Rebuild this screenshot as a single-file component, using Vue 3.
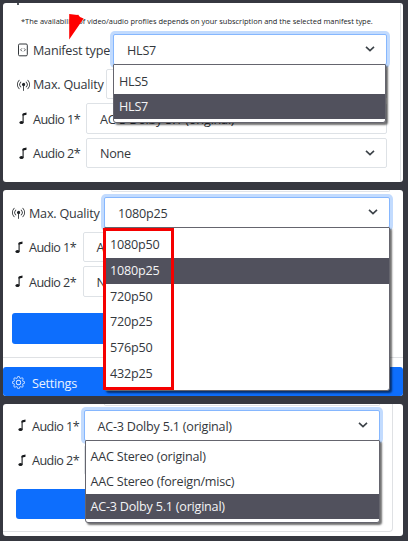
<script setup>
const panels = [
  {
    id: 'manifest',
    note: '*The availability of video/audio profiles depends on your subscription and the selected manifest type.',
    rows: [
      { icon: 'file', label: 'Manifest type', value: 'HLS7', focus: true, options: ['HLS5', 'HLS7'], selected: 'HLS7' },
      { icon: 'signal', label: 'Max. Quality', value: '' },
      { icon: 'music', label: 'Audio 1*', value: 'AC-3 Dolby 5.1 (original)' },
      { icon: 'music', label: 'Audio 2*', value: 'None' },
    ],
  },
  {
    id: 'quality',
    rows: [
      {
        icon: 'signal',
        label: 'Max. Quality',
        value: '1080p25',
        focus: true,
        options: ['1080p50', '1080p25', '720p50', '720p25', '576p50', '432p25'],
        selected: '1080p25',
        marked: true,
      },
      { icon: 'music', label: 'Audio 1*', value: 'AC-3 Dolby 5.1 (original)' },
      { icon: 'music', label: 'Audio 2*', value: 'None' },
    ],
    button: true,
    settings: true,
  },
  {
    id: 'audio',
    rows: [
      {
        icon: 'music',
        label: 'Audio 1*',
        value: 'AC-3 Dolby 5.1 (original)',
        focus: true,
        options: ['AAC Stereo (original)', 'AAC Stereo (foreign/misc)', 'AC-3 Dolby 5.1 (original)'],
        selected: 'AC-3 Dolby 5.1 (original)',
      },
      { icon: 'music', label: 'Audio 2*', value: '' },
    ],
    button: true,
  },
]
</script>

<template>
  <main class="page">
    <section v-for="p in panels" :key="p.id" class="panel" :class="p.id">
      <div class="card">
        <span v-if="!p.note" class="edge"></span>
        <span v-else class="stub"></span>
        <p v-if="p.note" class="note">{{ p.note }}</p>
        <div class="rows">
          <div v-for="r in p.rows" :key="r.label" class="row">
            <div class="label" :class="r.icon">
              <svg v-if="r.icon === 'file'" class="ic" viewBox="0 0 12 14">
                <rect x="1.5" y="1" width="8.8" height="11.8" rx="1.2" fill="none" stroke="#33373b" stroke-width="1" />
                <path d="M5 5.3 3.6 6.8 5 8.3M7 5.3 8.4 6.8 7 8.3" fill="none" stroke="#33373b" stroke-width=".8" />
              </svg>
              <svg v-else-if="r.icon === 'signal'" class="ic" viewBox="0 0 16 16">
                <path
                  fill="#212529"
                  d="M3.05 3.05a7 7 0 0 0 0 9.9.5.5 0 0 1-.707.707 8 8 0 0 1 0-11.314.5.5 0 0 1 .707.707m2.122 2.122a4 4 0 0 0 0 5.656.5.5 0 1 1-.708.708 5 5 0 0 1 0-7.072.5.5 0 0 1 .708.708m5.656-.708a.5.5 0 0 1 .708 0 5 5 0 0 1 0 7.072.5.5 0 1 1-.708-.708 4 4 0 0 0 0-5.656.5.5 0 0 1 0-.708m2.122-2.12a.5.5 0 0 1 .707 0 8 8 0 0 1 0 11.313.5.5 0 0 1-.707-.707 7 7 0 0 0 0-9.9.5.5 0 0 1 0-.707zM6 8a2 2 0 1 1 2.5 1.937V15.5a.5.5 0 0 1-1 0V9.937A2 2 0 0 1 6 8"
                />
              </svg>
              <svg v-else class="ic" viewBox="0 0 12 14">
                <ellipse cx="4.5" cy="11.5" rx="2.1" ry="1.5" fill="#17191c" />
                <path d="M6.1 11.5V3" fill="none" stroke="#17191c" stroke-width="1.1" />
                <path d="M5.55 3.2Q5.6 2.4 6.4 2.2L9.5 1.5V3.7L5.55 4.7z" fill="#17191c" />
              </svg>
              <span>{{ r.label }}</span>
            </div>
            <div class="select" :class="{ focus: r.focus }">
              <span>{{ r.value }}</span>
              <svg class="chev" viewBox="0 0 10 6">
                <path d="M1 .9 5 4.7 9 .9" fill="none" stroke="#3c4248" stroke-width="1.6" />
              </svg>
              <ul v-if="r.options" class="menu">
                <li v-for="o in r.options" :key="o" :class="{ on: o === r.selected }">{{ o }}</li>
                <li v-if="r.marked" class="mark"></li>
              </ul>
            </div>
          </div>
        </div>
        <div v-if="p.button" class="button"></div>
      </div>
      <div v-if="p.settings" class="settings">
        <svg class="gear" viewBox="0 0 16 16" fill="#d8e7ff">
          <path d="M8 4.754a3.246 3.246 0 1 0 0 6.492 3.246 3.246 0 0 0 0-6.492M5.754 8a2.246 2.246 0 1 1 4.492 0 2.246 2.246 0 0 1-4.492 0" />
          <path
            d="M9.796 1.343c-.527-1.79-3.065-1.79-3.592 0l-.094.319a.873.873 0 0 1-1.255.52l-.292-.16c-1.64-.892-3.433.902-2.54 2.541l.159.292a.873.873 0 0 1-.52 1.255l-.319.094c-1.79.527-1.79 3.065 0 3.592l.319.094a.873.873 0 0 1 .52 1.255l-.16.292c-.892 1.64.901 3.434 2.541 2.54l.292-.159a.873.873 0 0 1 1.255.52l.094.319c.527 1.79 3.065 1.79 3.592 0l.094-.319a.873.873 0 0 1 1.255-.52l.292.16c1.64.893 3.434-.902 2.54-2.541l-.159-.292a.873.873 0 0 1 .52-1.255l.319-.094c1.79-.527 1.79-3.065 0-3.592l-.319-.094a.873.873 0 0 1-.52-1.255l.16-.292c.893-1.64-.902-3.433-2.541-2.54l-.292.159a.873.873 0 0 1-1.255-.52zm-2.633.283c.246-.835 1.428-.835 1.674 0l.094.319a1.873 1.873 0 0 0 2.693 1.115l.291-.16c.764-.415 1.6.42 1.184 1.185l-.159.292a1.873 1.873 0 0 0 1.116 2.692l.318.094c.835.246.835 1.428 0 1.674l-.319.094a1.873 1.873 0 0 0-1.115 2.693l.16.291c.415.764-.42 1.6-1.185 1.184l-.291-.159a1.873 1.873 0 0 0-2.693 1.116l-.094.318c-.246.835-1.428.835-1.674 0l-.094-.319a1.873 1.873 0 0 0-2.692-1.115l-.292.16c-.764.415-1.6-.42-1.184-1.185l.159-.291A1.873 1.873 0 0 0 1.945 8.93l-.319-.094c-.835-.246-.835-1.428 0-1.674l.319-.094A1.873 1.873 0 0 0 3.06 4.377l-.16-.292c-.415-.764.42-1.6 1.185-1.184l.292.159a1.873 1.873 0 0 0 2.692-1.115z"
          />
        </svg>
        <span>Settings</span>
      </div>
      <svg v-if="p.note" class="arrow" viewBox="0 0 16 28">
        <path d="M1.2 1 9.5 2 10 1.4 12 4 15.6 5.5 1.2 26.5z" fill="#f00" />
      </svg>
    </section>
  </main>
</template>

<style>
body {
  margin: 0;
  background: #363840;
}
</style>

<style scoped>
* {
  box-sizing: border-box;
}
.page {
  width: 408px;
  height: 541px;
  padding: 3px 5px 5px 3px;
  display: flex;
  flex-direction: column;
  gap: 8px;
  background: #363840;
  color: #33373c;
  font: 12.6px/18px 'Open Sans', sans-serif;
  letter-spacing: -0.22px;
  overflow: hidden;
}
.panel {
  position: relative;
  background: #fff;
  border-radius: 3px;
  overflow: hidden;
}
.manifest { height: 179px; }
.quality { height: 206px; }
.audio { height: 132px; }
.card { position: relative; }
.manifest .card {
  width: 398px;
  height: 179px;
  border-right: 1px solid #e2e4e7;
}
.quality .card {
  height: 168px;
  padding-top: 7px;
  border-bottom: 1px solid #dfe1e4;
}
.audio .card {
  width: 390px;
  height: 128px;
  padding-top: 6px;
  border-right: 1px solid #dfe1e4;
  border-bottom: 1px solid #dfe1e4;
  border-radius: 0 0 4px 0;
}
.edge {
  position: absolute;
  top: 0;
  left: 108px;
  width: 279px;
  height: 2px;
  border: 1px solid #e0e3e8;
  border-top: 0;
  border-radius: 0 0 2px 2px;
}
.audio .edge {
  left: 101px;
  width: 276px;
}
.stub {
  position: absolute;
  top: 0;
  left: 14px;
  width: 2px;
  height: 2px;
  background: #51565c;
}
.note {
  margin: 0;
  padding: 13px 0 0 18px;
  height: 31px;
  font-size: 7.46px;
  line-height: 11px;
  letter-spacing: 0;
  white-space: nowrap;
  color: #202326;
}
.rows {
  display: flex;
  flex-direction: column;
  gap: 4px;
}
.row {
  display: flex;
  height: 30.5px;
}
.label {
  display: flex;
  align-items: center;
  white-space: nowrap;
  flex: none;
}
.label.music { letter-spacing: -0.55px; }
.ic {
  flex: none;
  width: 12px;
  height: 14px;
}
.file .ic { margin-top: 1px; }
.signal .ic {
  width: 13px;
  height: 13px;
  margin-top: 1px;
}
.label span { padding-top: 3px; }
.select {
  position: relative;
  flex: 1;
  display: flex;
  align-items: center;
  justify-content: space-between;
  padding: 0 11px 0 13px;
  border: 1px solid #dee2e6;
  border-radius: 2px;
  background: #fff;
  white-space: nowrap;
}
.select > span { padding-top: 3px; }
.select.focus > span { padding-top: 4px; }
.select.focus {
  border-color: #86b7fe;
  box-shadow: 0 0 0 3px #c2dbfe;
  z-index: 2;
}
.chev {
  width: 10px;
  height: 6px;
}
.manifest .row { margin-right: 13px; }
.manifest .label {
  padding-left: 14px;
  width: 83px;
}
.manifest .label.file { width: 110px; }
.manifest .label.signal {
  width: 103px;
  padding-left: 13.5px;
}
.manifest .label span { margin-left: 4px; }
.manifest .label.signal span { margin-left: 3.5px; }
.quality .row { margin-right: 13px; }
.quality .label {
  padding-left: 10px;
  width: 79.5px;
}
.quality .label.signal {
  width: 101px;
  padding-left: 9px;
}
.quality .label span { margin-left: 4px; }
.audio .row { margin-right: 12.5px; }
.audio .label {
  padding-left: 13px;
  width: 80.5px;
}
.audio .label span { margin-left: 4px; }
.menu {
  position: absolute;
  z-index: 3;
  top: 29px;
  left: -1px;
  right: -1px;
  margin: 0;
  padding: 4px 0 3px;
  list-style: none;
  background: #fff;
  border: 1px solid #65656e;
  border-radius: 1px 1px 3px 3px;
  box-shadow: 2px 2px 2px #00000090;
}
.menu li {
  height: 25px;
  line-height: 25px;
  padding-left: 5px;
}
.menu .on {
  background: #51515d;
  color: #f4f4f6;
}
.quality .menu li {
  height: 25.8px;
  line-height: 26px;
}
.manifest .menu { right: 0; }
.audio .menu {
  left: 0;
  padding: 3px 0;
}
.quality .menu .mark {
  position: absolute;
  left: -2px;
  top: 0;
  width: 71px;
  height: 162px;
  padding: 0;
  border: 3px solid #f50000;
}
.button {
  height: 31px;
  margin: 16px 13px 0 9px;
  background: #0d6efd;
  border-radius: 3px;
}
.audio .button {
  margin: 14px 12px 0 12.5px;
  height: 30px;
}
.settings {
  display: flex;
  align-items: center;
  gap: 7px;
  height: 29px;
  margin-top: 9px;
  padding: 5px 0 0 9px;
  background: #0d6efd;
  color: #e9f2ff;
  border-radius: 3px 3px 0 0;
}
.gear {
  width: 13px;
  height: 13px;
  margin-top: -4px;
}
.arrow {
  position: absolute;
  left: 65px;
  top: 10px;
  width: 16px;
  height: 28px;
}
</style>
